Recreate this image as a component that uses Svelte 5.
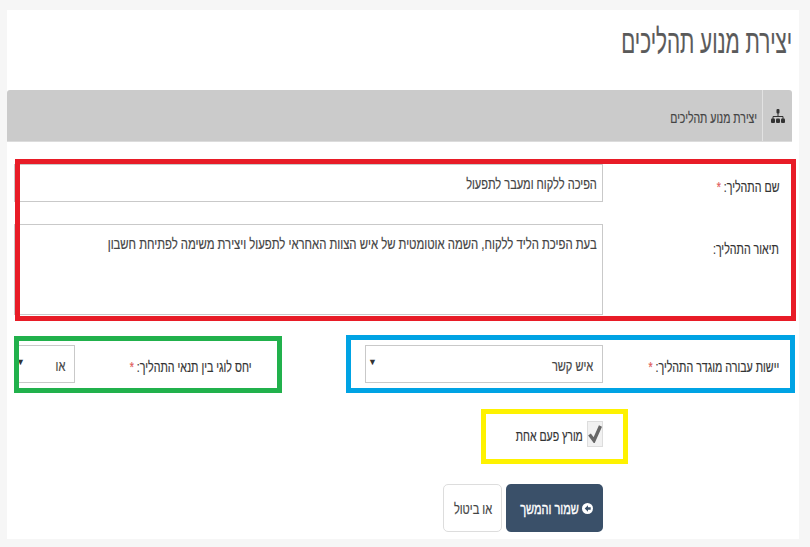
<script>
  const title = 'יצירת מנוע תהליכים';
</script>

<div class="page" dir="rtl">
  <main class="card">
    <h1><span class="sq title">{title}</span></h1>
    <section class="panel">
      <header class="panel-head">
        <span class="icon-cell">
          <svg width="14" height="14" viewBox="0 0 14 14" aria-hidden="true">
            <rect x="5.500" y="0" width="3" height="4.500" rx="1" fill="#333" />
            <path d="M7 4v4M2 10V7.500h10V10" fill="none" stroke="#333" />
            <rect x="0" y="9.500" width="4" height="4.500" rx="1" fill="#333" />
            <rect x="5" y="9.500" width="4" height="4.500" rx="1" fill="#333" />
            <rect x="10" y="9.500" width="4" height="4.500" rx="1" fill="#333" />
          </svg>
        </span>
        <span class="sq panel-title">{title}</span>
      </header>

      <div class="form">
        <div class="row name-row">
          <span class="label"><span class="sq">שם התהליך: <i>*</i></span></span>
          <div class="field text"><span class="sq">הפיכה ללקוח ומעבר לתפעול</span></div>
        </div>
        <div class="row desc-row">
          <span class="label"><span class="sq">תיאור התהליך:</span></span>
          <div class="field area"><span class="sq">בעת הפיכת הליד ללקוח, השמה אוטומטית של איש הצוות האחראי לתפעול ויצירת משימה לפתיחת חשבון</span></div>
        </div>
        <div class="row select-row">
          <span class="label"><span class="sq">יישות עבורה מוגדר התהליך: <i>*</i></span></span>
          <div class="field select wide"><span class="sq val">איש קשר</span><b>▼</b></div>
          <span class="label logic"><span class="sq">יחס לוגי בין תנאי התהליך: <i>*</i></span></span>
          <div class="field select narrow"><span class="sq val">או</span><b>▼</b></div>
        </div>
        <div class="check-row">
          <span class="check">
            <svg width="14" height="18" viewBox="0 0 14 18" aria-hidden="true">
              <path d="M1.500 9.500l4.500 6L12.500 1" fill="none" stroke="#666" stroke-width="3.400" />
            </svg>
          </span>
          <span class="sq check-label">מורץ פעם אחת</span>
        </div>
        <div class="actions">
          <button class="primary" type="button">
            <svg class="go" width="11" height="11" viewBox="0 0 12 12" aria-hidden="true">
              <circle cx="6" cy="6" r="6" fill="#fff" />
              <path d="M6.500 2.500L3 6l3.500 3.500V7.400H9.500V4.600H6.500z" fill="#3a5069" />
            </svg>
            <span class="sq">שמור והמשך</span>
          </button>
          <button class="cancel" type="button"><span class="sq mid">או ביטול</span></button>
        </div>
      </div>
    </section>
  </main>

  <div class="mark red"></div>
  <div class="mark green"></div>
  <div class="mark blue"></div>
  <div class="mark yellow"></div>
</div>

<style>
  :global(body) {
    margin: 0;
    background: #f6f6f6;
  }
  .page {
    position: relative;
    width: 810px;
    height: 547px;
    overflow: hidden;
    padding: 10px 11px 8px 7px;
    box-sizing: border-box;
    font-family: "Liberation Sans", Arial, sans-serif;
    color: #444;
  }
  .card {
    height: 529px;
    background: #fff;
    overflow: hidden;
  }
  .sq {
    display: inline-block;
    white-space: nowrap;
    transform: scaleX(0.735);
    transform-origin: right center;
    -webkit-text-stroke: 0.2px currentColor;
  }
  .sq.mid {
    transform-origin: center;
  }
  h1 {
    margin: 0;
    height: 80px;
    box-sizing: border-box;
    padding: 12px 7px 0 0;
    font-size: 34px;
    line-height: 38px;
    font-weight: 400;
    color: #5a5a5a;
  }
  .title {
    transform: scaleX(0.608);
  }
  .panel {
    margin-right: 7px;
  }
  .panel-head {
    display: flex;
    align-items: stretch;
    height: 52px;
    background: #cbcbcb;
    border-radius: 3px 3px 0 0;
    border-bottom: 1px solid #dcdcdc;
    box-sizing: border-box;
  }
  .icon-cell {
    width: 30px;
    padding-top: 1px;
    display: flex;
    align-items: center;
    justify-content: center;
    border-left: 1px solid #e2e2e2;
    box-sizing: border-box;
  }
  .panel-title {
    align-self: center;
    margin-right: 5px;
    margin-top: 4px;
    font-size: 15px;
    color: #444;
    transform: scaleX(0.7);
  }
  .form {
    padding: 22px 13px 0 7px;
  }
  .row {
    display: flex;
    align-items: flex-start;
  }
  .label {
    flex: none;
    width: 176px;
    font-size: 15px;
    color: #333;
    line-height: 16px;
  }
  .label .sq {
    transform: scaleX(0.71);
  }
  .label i {
    color: #e05a5a;
    font-style: normal;
  }
  .field {
    box-sizing: border-box;
    width: 589px;
    border: 1px solid #c9c9c9;
    background: #fff;
    font-size: 15px;
    color: #444;
  }
  .text {
    height: 38px;
    padding: 0 5px;
    line-height: 37px;
  }
  .name-row {
    height: 38px;
  }
  .name-row .label {
    padding-top: 15px;
  }
  .desc-row {
    margin-top: 22px;
    height: 91px;
  }
  .desc-row .label {
    padding-top: 17px;
  }
  .area {
    height: 91px;
    padding: 10px 5px;
    overflow: hidden;
    line-height: 17px;
  }
  .area .sq {
    transform: scaleX(0.755);
  }
  .select-row {
    margin-top: 30px;
    height: 38px;
  }
  .select-row > .label {
    padding-top: 14px;
  }
  .select {
    height: 38px;
    display: flex;
    align-items: center;
    justify-content: space-between;
  }
  .select b {
    font-size: 9px;
    font-weight: 400;
    color: #333;
    line-height: 1;
    margin-bottom: 3px;
  }
  .val {
    margin-top: 2px;
  }
  .wide {
    flex: none;
    width: 238px;
    padding: 0 9px 0 2px;
  }
  .narrow {
    flex: none;
    width: 61px;
    padding: 0 9px 0 1px;
    margin-right: auto;
  }
  .logic {
    width: auto;
    margin-right: 114px;
  }
  .check-row {
    display: flex;
    align-items: center;
    gap: 4px;
    margin-top: 38px;
    margin-right: 176px;
    height: 26px;
    font-size: 15px;
    color: #333;
  }
  .check-label {
    margin-top: 3px;
    transform: scaleX(0.7);
  }
  .check {
    flex: none;
    width: 16px;
    height: 26px;
    background: #f1f1f1;
    border: 1px solid #ddd;
    display: flex;
    align-items: center;
    justify-content: center;
    box-sizing: border-box;
  }
  .actions {
    display: flex;
    gap: 4px;
    margin-top: 37px;
    margin-right: 176px;
    height: 48px;
  }
  button {
    font: inherit;
    font-size: 15px;
    border-radius: 5px;
    height: 48px;
    box-sizing: border-box;
    padding: 0;
  }
  .primary {
    width: 97px;
    background: #3a5069;
    color: #fff;
    border: 0;
    display: flex;
    align-items: center;
    gap: 3px;
    padding-right: 10px;
  }
  .primary .sq {
    -webkit-text-stroke: 0.4px currentColor;
  }
  .go {
    flex: none;
  }
  .cancel {
    width: 59px;
    background: #fff;
    color: #444;
    border: 1px solid #ddd;
  }
  .mark {
    position: absolute;
    box-sizing: border-box;
    border: 5px solid;
  }
  .red {
    left: 15px;
    top: 159px;
    width: 781px;
    height: 162px;
    border-color: #e81c27;
  }
  .green {
    left: 14px;
    top: 336px;
    width: 268px;
    height: 57px;
    border-color: #21b14c;
  }
  .blue {
    left: 346px;
    top: 335px;
    width: 449px;
    height: 58px;
    border-color: #00a3e4;
  }
  .yellow {
    left: 481px;
    top: 409px;
    width: 147px;
    height: 55px;
    border-color: #fef200;
  }
</style>
